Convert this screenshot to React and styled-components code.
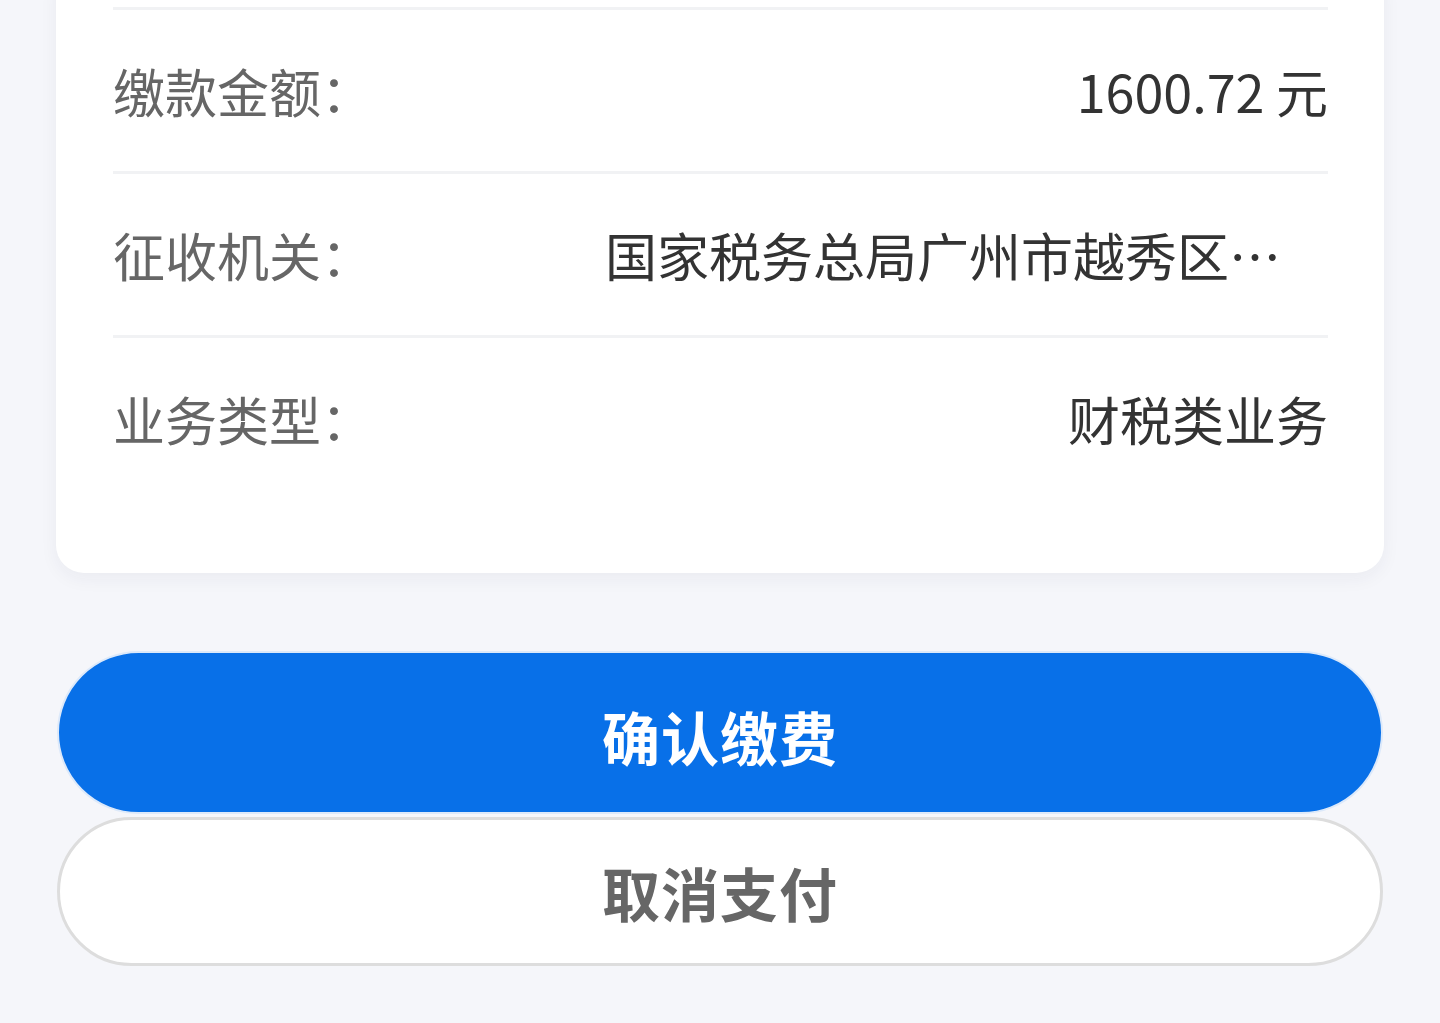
import React from 'react'
import styled, { createGlobalStyle } from 'styled-components'

const GlobalStyle = createGlobalStyle`
  html, body {
    margin: 0;
    padding: 0;
    background: #f5f6fa;
    font-family: 'Noto Sans CJK SC', 'Noto Sans', sans-serif;
  }
`

const Page = styled.div`
  width: 1440px;
  min-height: 1023px;
  background: #f5f6fa;
  display: flex;
  flex-direction: column;
`

const Card = styled.section`
  margin: -40px 56px 0;
  padding: 47px 56px 74px 57px;
  background: #ffffff;
  border-radius: 28px;
  box-shadow: 0 6px 18px rgba(30, 40, 80, 0.05);
  display: flex;
  flex-direction: column;
`

const Row = styled.div`
  height: 161px;
  border-top: 3px solid #f1f2f4;
  display: flex;
  align-items: center;
  justify-content: space-between;
  gap: 24px;
`

const Label = styled.span`
  flex-shrink: 0;
  font-size: 52px;
  color: #666666;
  line-height: 1.5;
`

const Value = styled.span`
  max-width: 723px;
  font-size: 52px;
  color: #333333;
  line-height: 1.5;
  text-align: right;
  white-space: nowrap;
  overflow: hidden;
  text-overflow: ellipsis;
`

const Actions = styled.div`
  margin-top: 78px;
  padding: 0 57px;
  display: flex;
  flex-direction: column;
  gap: 3px;
`

const Button = styled.button`
  height: ${(p) => (p.$primary ? '163px' : '149px')};
  border-radius: 999px;
  border: ${(p) => (p.$primary ? '2px solid #dce9fa' : '3px solid #dddddd')};
  background: ${(p) => (p.$primary ? '#0870e8' : '#ffffff')};
  color: ${(p) => (p.$primary ? '#ffffff' : '#666666')};
  font-family: 'Noto Sans CJK SC', 'Noto Sans', sans-serif;
  font-size: 58px;
  font-weight: 700;
  letter-spacing: 1px;
  display: flex;
  align-items: center;
  justify-content: center;
  padding: ${(p) => (p.$primary ? '6px 0 0' : '0')};
  cursor: pointer;
`

const rows = [
  { label: '缴款金额：', value: '1600.72 元' },
  { label: '征收机关：', value: '国家税务总局广州市越秀区税务局第一税务所' },
  { label: '业务类型：', value: '财税类业务' },
]

export default function App() {
  return (
    <Page>
      <GlobalStyle />
      <Card>
        {rows.map((r) => (
          <Row key={r.label}>
            <Label>{r.label}</Label>
            <Value>{r.value}</Value>
          </Row>
        ))}
      </Card>
      <Actions>
        <Button $primary>确认缴费</Button>
        <Button>取消支付</Button>
      </Actions>
    </Page>
  )
}
